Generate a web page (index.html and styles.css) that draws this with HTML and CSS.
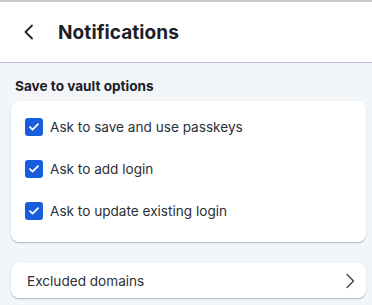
FILE: index.html
```html
<!DOCTYPE html>
<html>
<head>
<meta charset="utf-8">
<link rel="stylesheet" href="styles.css">
</head>
<body>
<div class="app">
  <header class="header">
    <button class="back" aria-label="Back">
      <svg width="12" height="16" viewBox="0 0 12 16"><path d="M9 1.5 L2.5 8 L9 14.5" fill="none" stroke="#1b2029" stroke-width="1.8" stroke-linecap="round" stroke-linejoin="round"/></svg>
    </button>
    <h1 class="title">Notifications</h1>
  </header>
  <main class="content">
    <h2 class="section-title">Save to vault options</h2>
    <div class="card options">
      <label class="row"><span class="check"><svg width="12" height="10" viewBox="0 0 12 10"><path d="M2 5.2 L4.6 7.6 L10 2.2" fill="none" stroke="#fff" stroke-width="1.8" stroke-linecap="round" stroke-linejoin="round"/></svg></span><span>Ask to save and use passkeys</span></label>
      <label class="row"><span class="check"><svg width="12" height="10" viewBox="0 0 12 10"><path d="M2 5.2 L4.6 7.6 L10 2.2" fill="none" stroke="#fff" stroke-width="1.8" stroke-linecap="round" stroke-linejoin="round"/></svg></span><span>Ask to add login</span></label>
      <label class="row"><span class="check"><svg width="12" height="10" viewBox="0 0 12 10"><path d="M2 5.2 L4.6 7.6 L10 2.2" fill="none" stroke="#fff" stroke-width="1.8" stroke-linecap="round" stroke-linejoin="round"/></svg></span><span>Ask to update existing login</span></label>
    </div>
    <div class="card link">
      <span>Excluded domains</span>
      <svg width="10" height="16" viewBox="0 0 10 16"><path d="M2 1.5 L8.5 8 L2 14.5" fill="none" stroke="#3a3f47" stroke-width="1.3" stroke-linecap="round" stroke-linejoin="round"/></svg>
    </div>
  </main>
</div>
</body>
</html>
```

FILE: styles.css
```css
* { box-sizing: border-box; }
html, body { margin: 0; padding: 0; }
body {
  font-family: Inter, "Noto Sans", sans-serif;
  color: #1b2029;
  background: #f3f6f9;
  width: 372px;
  height: 305px;
  overflow: hidden;
}
.app { border-top: 2px solid #c9cacc; }
.header {
  height: 61px;
  background: #fff;
  border-bottom: 1px solid #b8c0d0;
  display: flex;
  align-items: center;
  padding: 0 0 0 23px;
  gap: 22px;
}
.back {
  border: 0; background: none; padding: 0; margin: 0;
  display: flex; align-items: center;
  width: 13px; height: 16px;
}
.title {
  margin: 0;
  font-size: 19px;
  font-weight: 700;
  letter-spacing: 0.1px;
}
.content { padding: 14px 6px 0 11px; }
.section-title {
  margin: 0 0 6px 4px;
  font-size: 13.6px;
  font-weight: 700;
  line-height: 18px;
}
.card {
  background: #fff;
  border-radius: 8px;
  box-shadow: 0 1px 1.5px rgba(90, 95, 110, 0.45);
}
.options {
  padding: 17px 14px 22px 14px;
  display: flex; flex-direction: column; gap: 24px;
}
.row {
  display: flex; align-items: center; gap: 7px;
  font-size: 13.6px; line-height: 18px; color: #2a2f36;
}
.check {
  width: 18px; height: 18px; border-radius: 3px;
  background: #175ddc;
  display: flex; align-items: center; justify-content: center;
}
.link {
  margin-top: 21px;
  height: 35px;
  display: flex; align-items: center; justify-content: space-between;
  padding: 0 11px 0 16px;
  font-size: 13.6px; color: #2a2f36;
}
```
